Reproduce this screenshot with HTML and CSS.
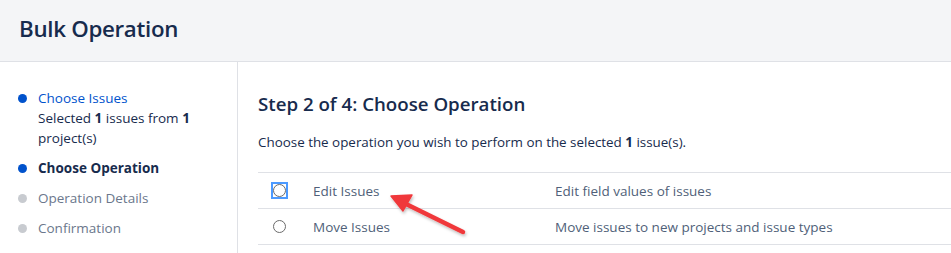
FILE: index.html
```html
<!DOCTYPE html>
<html>
<head>
<meta charset="utf-8">
<link rel="stylesheet" href="styles.css">
</head>
<body>
<header class="page-header"><h1>Bulk Operation</h1></header>
<div class="layout">
  <nav class="steps">
    <ul>
      <li class="step done"><span class="dot"></span><div><a>Choose Issues</a><div class="sub">Selected <b>1</b> issues from <b>1</b> project(s)</div></div></li>
      <li class="step current"><span class="dot"></span><div>Choose Operation</div></li>
      <li class="step todo"><span class="dot"></span><div>Operation Details</div></li>
      <li class="step todo"><span class="dot"></span><div>Confirmation</div></li>
    </ul>
  </nav>
  <main class="content">
    <h2>Step 2 of 4: Choose Operation</h2>
    <p class="intro">Choose the operation you wish to perform on the selected <b>1</b> issue(s).</p>
    <div class="ops">
      <div class="op-row">
        <span class="radio-cell"><span class="radio focused"><span class="circle"></span></span></span>
        <span class="op-name">Edit Issues</span>
        <span class="op-desc">Edit field values of issues</span>
      </div>
      <div class="op-row">
        <span class="radio-cell"><span class="radio"><span class="circle"></span></span></span>
        <span class="op-name">Move Issues</span>
        <span class="op-desc">Move issues to new projects and issue types</span>
      </div>
    </div>
  </main>
</div>
<svg class="arrow" width="951" height="253" viewBox="0 0 951 253">
  <defs>
    <filter id="sh" x="-20%" y="-20%" width="140%" height="140%">
      <feDropShadow dx="1" dy="2" stdDeviation="1.5" flood-color="#000" flood-opacity="0.25"/>
    </filter>
  </defs>
  <g filter="url(#sh)" fill="#f0393b" stroke="#f0393b">
    <line x1="463" y1="232" x2="404" y2="203" stroke-width="4.5" stroke-linecap="round"/>
    <polygon points="391,196 412,195 403,211" stroke-width="1.5" stroke-linejoin="round"/>
  </g>
</svg>
</body>
</html>
```
FILE: styles.css
```css
* { box-sizing: border-box; }
html, body { margin: 0; padding: 0; }
body {
  font-family: "Open Sans", "Noto Sans", "Liberation Sans", sans-serif;
  color: #172b4d;
  font-size: 14px;
  background: #fff;
  width: 951px;
  height: 253px;
  overflow: hidden;
  position: relative;
}
.page-header {
  height: 62px;
  background: #f4f5f7;
  border-bottom: 1px solid #dfe1e6;
  padding: 0 19px;
  display: flex;
  align-items: center;
}
.page-header h1 {
  margin: 0;
  font-size: 22.3px;
  font-weight: 600;
  color: #172b4d;
  letter-spacing: -0.3px;
  position: relative;
  top: -2px;
}
.layout { display: flex; height: 191px; }
.steps {
  width: 238px;
  border-right: 1px solid #dfe1e6;
  padding: 26px 0 0 16px;
}
.steps ul { list-style: none; margin: 0; padding: 0; }
.step { display: flex; line-height: 20px; margin-bottom: 10px; font-size: 13.5px; }
.dot {
  width: 9px; height: 9px; border-radius: 50%;
  margin: 6px 11px 0 2px; flex: none;
}
.done .dot, .current .dot { background: #0052cc; }
.todo .dot { background: #c8cbd0; }
.done a { color: #0052cc; }
.done .sub { color: #172b4d; padding-right: 40px; }
.current { font-weight: 700; color: #172b4d; }
.todo { color: #6b778c; }
.content { flex: 1; padding: 28px 0 0 20px; }
.content h2 {
  margin: 0;
  font-size: 18.7px;
  font-weight: 600;
  line-height: 28px;
  color: #172b4d;
}
.intro { margin: 14px 0 0; line-height: 20px; font-size: 13.4px; color: #172b4d; }
.ops { margin-top: 20px; border-top: 1px solid #dfe1e6; }
.op-row {
  display: flex;
  align-items: center;
  height: 36px;
  border-bottom: 1px solid #dfe1e6;
  color: #505f79;
  font-size: 13.5px;
}
.radio-cell { width: 55px; display: flex; padding-left: 13px; }
.radio {
  width: 17px; height: 17px;
  display: flex; align-items: center; justify-content: center;
  border: 2px solid transparent;
}
.radio.focused { border-color: #4c9aff; }
.circle {
  width: 13px; height: 13px; border-radius: 50%;
  border: 1px solid #6b6b6b; background: #fff;
}
.op-name { width: 242px; }
.op-desc { flex: 1; }
.arrow { position: absolute; left: 0; top: 0; pointer-events: none; }
```
